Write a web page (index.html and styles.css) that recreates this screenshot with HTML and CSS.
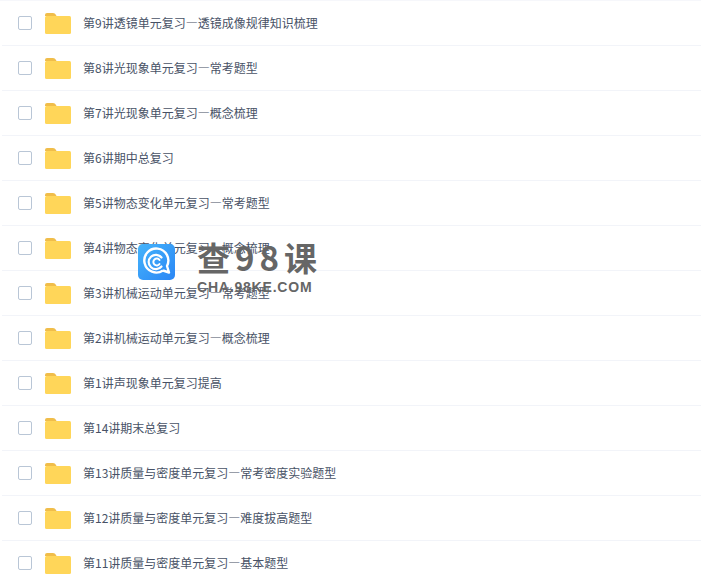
FILE: index.html
```html
<!DOCTYPE html>
<html lang="zh">
<head>
    <meta charset='utf-8'>
    <title>文件列表</title>
    <link rel="stylesheet" href="styles.css">
</head>
<body>

<svg class="defs" width="0" height="0">
    <symbol id="folder" viewBox="0 0 26 21">
        <path d="M0 2 Q0 0 2 0 H8 Q10 0 11 2 L11.5 3 H0 Z" fill="#f0bd4a"/>
        <rect x="0" y="3" width="26" height="18" rx="1.5" fill="#ffd659"/>
    </symbol>
</svg>

<ul class="files">
    <li class="row"><span class="check"></span><svg class="folder"><use href="#folder"/></svg><span class="name">第9讲透镜单元复习—透镜成像规律知识梳理</span></li>
    <li class="row"><span class="check"></span><svg class="folder"><use href="#folder"/></svg><span class="name">第8讲光现象单元复习—常考题型</span></li>
    <li class="row"><span class="check"></span><svg class="folder"><use href="#folder"/></svg><span class="name">第7讲光现象单元复习—概念梳理</span></li>
    <li class="row"><span class="check"></span><svg class="folder"><use href="#folder"/></svg><span class="name">第6讲期中总复习</span></li>
    <li class="row"><span class="check"></span><svg class="folder"><use href="#folder"/></svg><span class="name">第5讲物态变化单元复习—常考题型</span></li>
    <li class="row"><span class="check"></span><svg class="folder"><use href="#folder"/></svg><span class="name">第4讲物态变化单元复习—概念梳理</span></li>
    <li class="row"><span class="check"></span><svg class="folder"><use href="#folder"/></svg><span class="name">第3讲机械运动单元复习—常考题型</span></li>
    <li class="row"><span class="check"></span><svg class="folder"><use href="#folder"/></svg><span class="name">第2讲机械运动单元复习—概念梳理</span></li>
    <li class="row"><span class="check"></span><svg class="folder"><use href="#folder"/></svg><span class="name">第1讲声现象单元复习提高</span></li>
    <li class="row"><span class="check"></span><svg class="folder"><use href="#folder"/></svg><span class="name">第14讲期末总复习</span></li>
    <li class="row"><span class="check"></span><svg class="folder"><use href="#folder"/></svg><span class="name">第13讲质量与密度单元复习—常考密度实验题型</span></li>
    <li class="row"><span class="check"></span><svg class="folder"><use href="#folder"/></svg><span class="name">第12讲质量与密度单元复习—难度拔高题型</span></li>
    <li class="row"><span class="check"></span><svg class="folder"><use href="#folder"/></svg><span class="name">第11讲质量与密度单元复习—基本题型</span></li>
</ul>

<div class="mark">
    <svg class="mark-logo" viewBox="0 0 37 36">
        <defs>
            <linearGradient id="logo-bg" x1="0" y1="0" x2="1" y2="1">
                <stop offset="0" stop-color="#45b4fb"/>
                <stop offset="1" stop-color="#2a86f5"/>
            </linearGradient>
        </defs>
        <rect width="37" height="36" rx="5" fill="url(#logo-bg)"/>
        <path d="M25 26.5 A12 12 0 1 1 29 22 L31 28.5 L25 26.5" fill="none" stroke="#fff" stroke-width="2.4" stroke-linejoin="round"/>
        <path d="M23.5 13.5 A7.2 7.2 0 1 0 23.5 22.5" fill="none" stroke="#fff" stroke-width="2.2" stroke-linecap="round"/>
        <path d="M21.5 16 A3.4 3.4 0 1 0 21.5 20" fill="none" stroke="#fff" stroke-width="2" stroke-linecap="round"/>
    </svg>
    <div class="mark-text">
        <div class="mark-title">查98课</div>
        <div class="mark-url">CHA.98KE.COM</div>
    </div>
</div>

</body>
</html>
```

FILE: styles.css
```css
body {
    margin: 0;
    background: #FFFFFF;
    font-family: "Noto Sans CJK SC", "Liberation Sans", sans-serif;
    overflow: hidden;
}

.defs {
    position: absolute;
}

.files {
    list-style: none;
    margin: 0;
    padding: 0 0 0 2px;
    border-top: 1px solid #f6f7fb;
}

.row {
    display: flex;
    align-items: center;
    box-sizing: border-box;
    height: 45px;
    padding-left: 16px;
    border-bottom: 1px solid #f2f4f9;
}

.check {
    box-sizing: border-box;
    width: 14px;
    height: 14px;
    border: 1px solid #b9c6d6;
    border-radius: 2px;
    background: #FFFFFF;
}

.folder {
    width: 26px;
    height: 21px;
    margin-left: 13px;
}

.name {
    margin-left: 12px;
    margin-bottom: 2px;
    color: #485266;
    font-size: 12px;
}

.mark {
    position: absolute;
    left: 138px;
    top: 238px;
    display: flex;
    gap: 22px;
}

.mark-logo {
    width: 37px;
    height: 36px;
    margin-top: 6px;
}

.mark-text {
    color: #666666;
}

.mark-title {
    font-size: 33px;
    font-weight: 700;
    line-height: 38px;
    letter-spacing: 5px;
    white-space: nowrap;
}

.mark-url {
    font-family: "Liberation Sans", sans-serif;
    font-size: 14px;
    font-weight: 700;
    line-height: 16px;
    letter-spacing: 0.8px;
    margin-top: 3px;
}
```
